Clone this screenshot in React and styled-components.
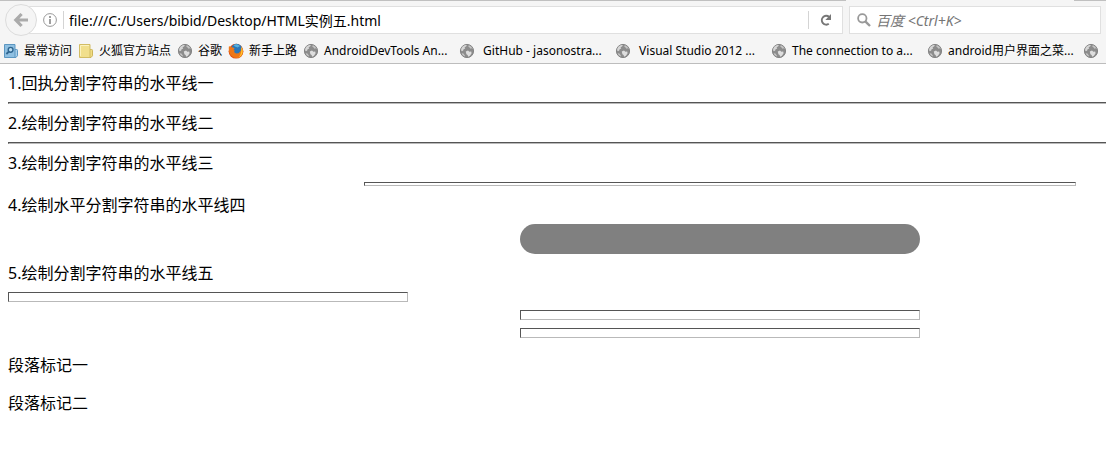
import React from 'react'
import styled, { createGlobalStyle } from 'styled-components'

const GlobalStyle = createGlobalStyle`
  body {
    margin:0;
    background:#ffffff;
    color:#000000;
    font-family:"Noto Sans", "Noto Sans CJK SC", sans-serif;
  }
`

const Chrome = styled.header`
  background:#f5f5f5;
  border-bottom:1px solid #bdbdbd;
`

const TabEdge = styled.div`
  height:1px;
  display:flex;
`

const EdgeLine = styled.div`
  flex:${props => props.$grow || '0 0 32px'};
  background:#c0c0c0;
`

const EdgeGap = styled.div`
  flex:0 0 228px;
`

const Toolbar = styled.div`
  display:flex;
  align-items:center;
  height:38px;
  padding:0 5px;
`

const BackButton = styled.button`
  display:flex;
  align-items:center;
  justify-content:center;
  box-sizing:border-box;
  flex:none;
  width:32px;
  height:32px;
  padding:0;
  border:1px solid #dcdcdc;
  border-radius:50%;
  background:#f5f5f5;
  z-index:1;
`

const AddressBar = styled.form`
  display:flex;
  align-items:center;
  box-sizing:border-box;
  flex:1;
  min-width:0;
  height:28px;
  margin-left:-8px;
  padding-left:6px;
  border:1px solid #e0e0e0;
  background:#ffffff;
`

const Divider = styled.span`
  flex:none;
  width:1px;
  height:18px;
  background:#d4d4d4;
`

const IconButton = styled.button`
  display:flex;
  align-items:center;
  justify-content:center;
  flex:none;
  width:${props => props.$width};
  height:24px;
  padding:0;
  border:0;
  background:none;
`

const Field = styled.input`
  flex:1;
  min-width:0;
  padding:0 5px;
  border:0;
  outline:0;
  background:none;
  color:#000000;
  font-family:inherit;
  font-size:14px;
  &::placeholder {
    color:#757575;
    opacity:1;
    font-style:italic;
  }
`

const SearchBox = styled.form`
  display:flex;
  align-items:center;
  box-sizing:border-box;
  flex:0 0 252px;
  height:28px;
  margin-left:6px;
  padding-left:7px;
  border:1px solid #e0e0e0;
  background:#ffffff;
`

const Bookmarks = styled.nav`
  display:flex;
  align-items:center;
  height:24px;
  padding-left:3px;
  overflow:hidden;
`

const Bookmark = styled.a`
  display:flex;
  align-items:center;
  flex:none;
  box-sizing:border-box;
  gap:5px;
  width:${props => props.$width};
  color:#000000;
  font-size:12px;
  line-height:16px;
  text-decoration:none;
  white-space:pre;
  svg {
    flex:none;
  }
`

const Viewport = styled.div`
  overflow:hidden;
`

/* wide canvas: the centred rules are laid out past the right edge */
const Page = styled.main`
  box-sizing:border-box;
  min-width:1440px;
  padding:8px;
  font-size:16px;
  line-height:22px;
`

const Rule = styled.hr`
  box-sizing:border-box;
  width:${props => props.$width || '100%'};
  height:${props => props.$height || '2px'};
  margin:8px auto;
  margin-left:${props => props.$left ? '0' : 'auto'};
  border:1px solid;
  border-color:#555555 #b9b9b9 #b9b9b9 #555555;
`

const Pill = styled(Rule)`
  border:0;
  border-radius:15px;
  background:#808080;
`

const Paragraph = styled.p`
  margin:16px 0;
`

const Globe = () => (
  <svg width="16" height="16" viewBox="0 0 16 16" aria-hidden="true">
    <circle cx="8" cy="8" r="6.6" fill="#8c8c8c" stroke="#858585" />
    <path d="M2 7.2C2.3 4.6 4 2.6 6.4 2L8 2.2 7 3.6 5.6 4.2 6.2 5.4 4.6 6.2 4.2 7.6 3 8.2z" fill="#d6d6d6" />
    <path d="M9.6 2.2C11.6 2.8 13.2 4.2 13.8 6L12.4 5.2 11.4 5.8 10.6 4.6 9.4 3.8z" fill="#c4c4c4" />
    <path d="M6.8 8.4L9 7.6 10.4 8.8 12.2 8.6 12.6 10.2 11 12.8 9.2 13.8 8.6 12 7.4 11.2z" fill="#dedede" />
    <path d="M2.6 10.2L4.4 10.6 5.8 12.4 6 13.6C4.4 13 3.2 11.8 2.6 10.2z" fill="#c8c8c8" />
  </svg>
)

const FolderSearch = () => (
  <svg width="16" height="16" viewBox="0 0 16 16" aria-hidden="true">
    <path d="M11.5 6.5h2.2q.8 0 .8.8v5.4l-1.5 1.8h-1.5z" fill="#a9d0ec" stroke="#5c97c2" />
    <path d="M1.5 1.5h10.5v13H1.5z" fill="#8fc0e2" stroke="#5b96c1" />
    <circle cx="7.6" cy="6.8" r="2.4" fill="#b9dbf1" stroke="#2f6690" strokeWidth="1.4" />
    <path d="M5.8 8.6L3.4 11" stroke="#2f6690" strokeWidth="1.8" />
  </svg>
)

const Folder = () => (
  <svg width="16" height="16" viewBox="0 0 16 16" aria-hidden="true">
    <path d="M11.5 6.5h2.2q.8 0 .8.8v5.4l-1.5 1.8h-1.5z" fill="#f0dc82" stroke="#cdb55a" />
    <path d="M1.5 1.5h10.5v13H1.5z" fill="#f1df8c" stroke="#d2bc64" />
    <path d="M2.5 13V2.5H11" fill="none" stroke="#fbf2bf" />
  </svg>
)

const Firefox = () => (
  <svg width="16" height="16" viewBox="0 0 16 16" aria-hidden="true">
    <circle cx="8" cy="8.2" r="7.4" fill="#dd4f14" />
    <circle cx="8.6" cy="6.4" r="5.6" fill="#2a77b8" />
    <path d="M5.5 2.2Q9 .2 12 3L9.6 4.4 7 3.6z" fill="#58b1dc" />
    <path d="M1 3l1.4 1 2.8.4 1.4 1.2L5.4 7l1.4.4L6 9l2 1.4 2.6-.2 2.2-2.4.2-3.4C16.4 7.6 15.6 12.8 11 14.8 5.4 16.4-.4 12 1 3z" fill="#ee7716" />
    <path d="M13 3.4c3 3.6 1.8 9-2.4 11 2-2.6 3.4-5.8 2.4-11z" fill="#ffc62c" />
  </svg>
)

const bookmarks = [
  { label: '最常访问', width: '75px', Icon: FolderSearch },
  { label: '火狐官方站点', width: '99px', Icon: Folder },
  { label: '谷歌', width: '51px', Icon: Globe },
  { label: '新手上路', width: '75px', Icon: Firefox },
  { label: 'AndroidDevTools An...', width: '156px', Icon: Globe },
  { label: ' GitHub - jasonostra...', width: '156px', Icon: Globe },
  { label: ' Visual Studio 2012 ...', width: '156px', Icon: Globe },
  { label: 'The connection to a...', width: '156px', Icon: Globe },
  { label: 'android用户界面之菜...', width: '156px', Icon: Globe },
  { label: '', width: '16px', Icon: Globe },
]

const App = () => {
  return (
    <>
      <GlobalStyle />
      <Chrome>
        <TabEdge>
          <EdgeLine $grow="1" />
          <EdgeGap />
          <EdgeLine />
        </TabEdge>
        <Toolbar>
          <BackButton aria-label="Back">
            <svg width="16" height="16" viewBox="0 0 16 16">
              <path d="M8.6 2L2.8 8l5.8 6M3.4 8H15" fill="none" stroke="#ababab" strokeWidth="3.2" />
            </svg>
          </BackButton>
          <AddressBar>
            <IconButton type="button" $width="27px" aria-label="Site information">
              <svg width="14" height="14" viewBox="0 0 14 14">
                <circle cx="7" cy="7" r="6.4" fill="none" stroke="#999" />
                <path d="M7 3v2M7 6v5" stroke="#888" strokeWidth="1.6" />
              </svg>
            </IconButton>
            <Divider />
            <Field aria-label="Address" defaultValue="file:///C:/Users/bibid/Desktop/HTML实例五.html" />
            <Divider />
            <IconButton type="button" $width="33px" aria-label="Reload">
              <svg width="14" height="14" viewBox="0 0 14 14">
                <path d="M9.8 10.8A4.4 4.4 0 1 1 10 3.8" fill="none" stroke="#777" strokeWidth="2" />
                <path d="M12 1v6H6.4z" fill="#777" />
              </svg>
            </IconButton>
          </AddressBar>
          <SearchBox>
            <svg width="14" height="14" viewBox="0 0 14 14" aria-hidden="true">
              <circle cx="5.3" cy="5.3" r="4.2" fill="none" stroke="#999" strokeWidth="1.8" />
              <path d="M8.3 8.3L13 13" stroke="#999" strokeWidth="2.4" />
            </svg>
            <Field aria-label="Search" placeholder="百度 <Ctrl+K>" />
          </SearchBox>
        </Toolbar>
        <Bookmarks>
          {bookmarks.map(({ label, width, Icon }, index) => (
            <Bookmark key={index} href="#" $width={width} aria-label={label || 'Bookmark'}>
              <Icon />
              {label}
            </Bookmark>
          ))}
        </Bookmarks>
      </Chrome>
      <Viewport>
        <Page>
          <div>1.回执分割字符串的水平线一</div>
          <Rule />
          <div>2.绘制分割字符串的水平线二</div>
          <Rule />
          <div>3.绘制分割字符串的水平线三</div>
          <Rule $width="50%" $height="4px" />
          <div>4.绘制水平分割字符串的水平线四</div>
          <Pill $width="400px" $height="30px" />
          <div>5.绘制分割字符串的水平线五</div>
          <Rule $width="400px" $height="10px" $left />
          <Rule $width="400px" $height="10px" />
          <Rule $width="400px" $height="10px" />
          <Paragraph>段落标记一</Paragraph>
          <Paragraph>段落标记二</Paragraph>
        </Page>
      </Viewport>
    </>
  )
}

export default App
